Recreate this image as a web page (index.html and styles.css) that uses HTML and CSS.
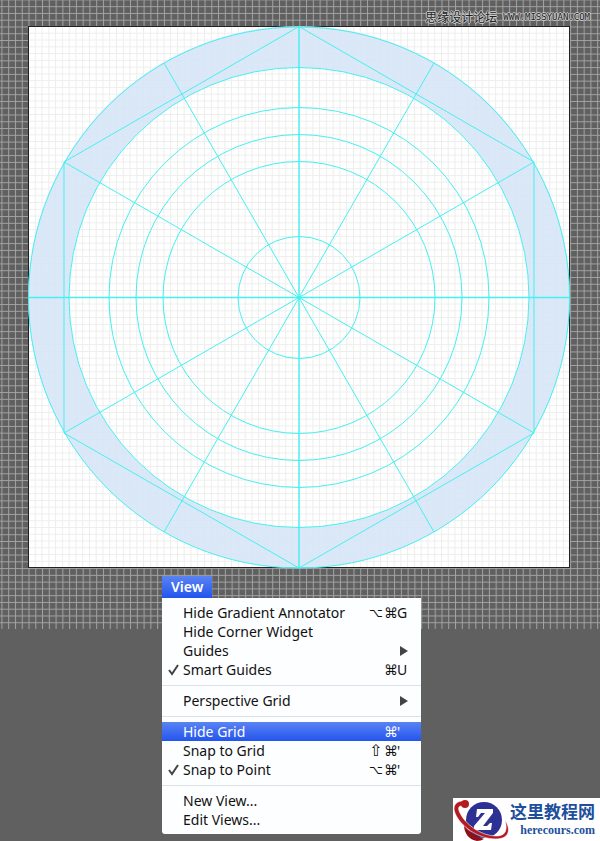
FILE: index.html
```html
<!DOCTYPE html>
<html lang="en">
<head>
<meta charset="utf-8">
<title>View menu</title>
<link rel="stylesheet" href="styles.css">
</head>
<body>
<main class="workspace">
  <svg class="canvas" viewBox="0 0 600 629" role="img" aria-label="Artboard with circular guides">
    <defs>
      <pattern id="grid-dark" x="28.5" y="26.5" width="6.77" height="6.77" patternUnits="userSpaceOnUse">
        <path d="M0 .5H6.77M.5 0V6.77" stroke="#a2a2a2" stroke-width="1"/>
      </pattern>
      <pattern id="grid-light" x="28" y="26" width="6.77" height="6.77" patternUnits="userSpaceOnUse">
        <path d="M0 .5H6.77M.5 0V6.77" stroke="#6a7a6a" stroke-opacity=".13" stroke-width="1"/>
      </pattern>
    </defs>
    <rect width="600" height="629" fill="#606060"/>
    <rect width="600" height="629" fill="url(#grid-dark)"/>
    <rect x="28.5" y="26.5" width="541" height="541" fill="#fff" stroke="#222"/>
    <rect x="29" y="27" width="540" height="540" fill="url(#grid-light)"/>
    <path fill="#d5e4f7" fill-opacity=".85" fill-rule="evenodd" d="M28 297a271 271 0 1 0 542 0a271 271 0 1 0-542 0zM69 297.500a230 230 0 1 0 460 0a230 230 0 1 0-460 0z"/>
    <g fill="none" stroke="#45f0f0" stroke-width="1">
      <circle cx="299" cy="297.500" r="270.500"/>
      <circle cx="299" cy="297.500" r="230"/>
      <circle cx="299" cy="297.500" r="190"/>
      <circle cx="299" cy="297.500" r="163"/>
      <circle cx="299" cy="297.500" r="136"/>
      <circle cx="299" cy="297.500" r="61"/>
      <path d="M299 26.500L534 162V433L299 568L64 433V162z"/>
      <path d="M164 63L434 532M434 63L164 532M64 162L534 433M534 162L64 433"/>
      <path d="M299 26V568M28 297.500H570" stroke-width="1.400"/>
    </g>
  </svg>

  <p class="credit"><span class="credit-name" lang="zh">思缘设计论坛</span><span class="credit-url">WWW.MISSYUAN.COM</span></p>

  <nav class="menu">
    <button class="menu-title">View</button>
    <div class="menu-list">
      <button class="item"><span class="check"></span><span class="label">Hide Gradient Annotator</span><kbd><span class="option">⌥</span><span>⌘</span><span>G</span></kbd></button>
      <button class="item"><span class="check"></span><span class="label">Hide Corner Widget</span></button>
      <button class="item"><span class="check"></span><span class="label">Guides</span><svg class="arrow" viewBox="0 0 8 10"><path d="M0 0L8 5L0 10z"/></svg></button>
      <button class="item"><svg class="check" viewBox="0 0 21 19"><path d="M7 10L10 14L16 5"/></svg><span class="label">Smart Guides</span><kbd><span>⌘</span><span>U</span></kbd></button>
      <hr>
      <button class="item"><span class="check"></span><span class="label">Perspective Grid</span><svg class="arrow" viewBox="0 0 8 10"><path d="M0 0L8 5L0 10z"/></svg></button>
      <hr>
      <button class="item selected"><span class="check"></span><span class="label">Hide Grid</span><kbd><span>⌘</span><span>'</span></kbd></button>
      <button class="item"><span class="check"></span><span class="label">Snap to Grid</span><kbd><span class="shift">⇧</span><span>⌘</span><span>'</span></kbd></button>
      <button class="item"><svg class="check" viewBox="0 0 21 19"><path d="M7 10L10 14L16 5"/></svg><span class="label">Snap to Point</span><kbd><span class="option">⌥</span><span>⌘</span><span>'</span></kbd></button>
      <hr>
      <button class="item"><span class="check"></span><span class="label">New View...</span></button>
      <button class="item"><span class="check"></span><span class="label">Edit Views...</span></button>
    </div>
  </nav>

  <a class="brand" href="#">
    <svg class="brand-mark" viewBox="0 0 57 43" aria-hidden="true">
      <circle cx="31" cy="22" r="18" fill="#2c3193"/>
      <path d="M24 11H40V15L30 28H34L37 25H39L38 32H21V28L32 15H28L25 19H23z" fill="#fff"/>
      <path d="M11 27C16 34 23 38 31 41Q28 43 24 43C16 42 11 35 11 27z" fill="#8d1016"/>
      <path d="M12 3C3 2 -1 8 2 15C7 28 25 41 43 41C55 41 59 33 52 22C55 33 52 38 43 38C28 38 12 26 7 15C4 9 6 7 12 8z" fill="#b51a20" stroke="#fff" stroke-width=".6"/>
      <circle cx="12" cy="6" r="4" fill="#b51a20"/>
    </svg>
    <span class="brand-text"><span class="brand-name" lang="zh">这里教程网</span><span class="brand-url">herecours.com</span></span>
  </a>
</main>
</body>
</html>
```
FILE: styles.css
```css
* { box-sizing: border-box; }

body {
  margin: 0;
  background: #606060;
  font-family: "Noto Sans", "DejaVu Sans", sans-serif;
}

.workspace {
  position: relative;
  min-height: 100vh;
}

.canvas {
  display: block;
  width: 100%;
}

.credit {
  position: absolute;
  top: 8px;
  right: 10px;
  display: flex;
  align-items: center;
  gap: 6px;
  margin: 0;
  line-height: 16px;
  color: #222;
  text-shadow: 1px 0 #ccc, -1px 0 #ccc, 0 1px #ccc, 0 -1px #ccc;
}

.credit-name {
  font-family: "Noto Sans CJK SC", sans-serif;
  font-size: 12px;
}

.credit-url {
  font-family: "DejaVu Sans Mono", monospace;
  font-size: 9px;
  line-height: 18px;
}

.menu {
  position: absolute;
  top: 576px;
  left: 27%;
  width: 259px;
}

button {
  border: 0;
  margin: 0;
  font: inherit;
  color: inherit;
  background: none;
}

.menu-title {
  display: block;
  height: 22px;
  padding: 0 9px;
  font-size: 14px;
  font-weight: 600;
  line-height: 22px;
  color: #fff;
  background: linear-gradient(#5a83f2, #2355ee);
}

.menu-list {
  padding: 5px 0;
  background: #fdfeff;
  border-radius: 0 0 3px 3px;
  font-size: 14px;
  color: #111;
}

.item {
  display: flex;
  align-items: center;
  width: 100%;
  height: 19px;
  padding: 0 13px 0 0;
  line-height: 19px;
  text-align: left;
}

.selected {
  color: #fff;
  background: linear-gradient(#5a83f2, #2355ee);
}

.check {
  flex: none;
  width: 21px;
  height: 19px;
  fill: none;
  stroke: #444;
  stroke-width: 2;
}

.label {
  flex: 1;
  white-space: nowrap;
}

.arrow {
  width: 8px;
  height: 10px;
  fill: #444;
}

kbd {
  display: flex;
  font-family: "Noto Sans", "DejaVu Sans", sans-serif;
}

kbd span {
  width: 13px;
  text-align: center;
}

kbd .option {
  width: 15px;
  font-size: 12px;
  text-align: left;
}

kbd .shift {
  width: 15px;
  font-family: "DejaVu Sans", sans-serif;
  font-size: 16px;
  text-align: left;
}

kbd span:last-child {
  width: 11px;
  text-align: left;
}

hr {
  height: 12px;
  margin: 0;
  border: 0;
  background: linear-gradient(#dde2e6, #dde2e6) center / 100% 1px no-repeat;
}

.brand {
  position: absolute;
  right: 0;
  bottom: 0;
  display: flex;
  width: 147px;
  height: 43px;
  background: #fff;
  color: #1d4f9c;
  text-decoration: none;
}

.brand-mark {
  flex: none;
  width: 57px;
  height: 43px;
}

.brand-text {
  display: flex;
  flex-direction: column;
  align-items: flex-end;
  padding-top: 3px;
}

.brand-name {
  font-family: "Noto Sans CJK SC", sans-serif;
  font-size: 17px;
  font-weight: 700;
  line-height: 20px;
}

.brand-url {
  font-family: "Liberation Serif", serif;
  font-size: 12px;
  font-weight: 700;
  line-height: 18px;
}
```
